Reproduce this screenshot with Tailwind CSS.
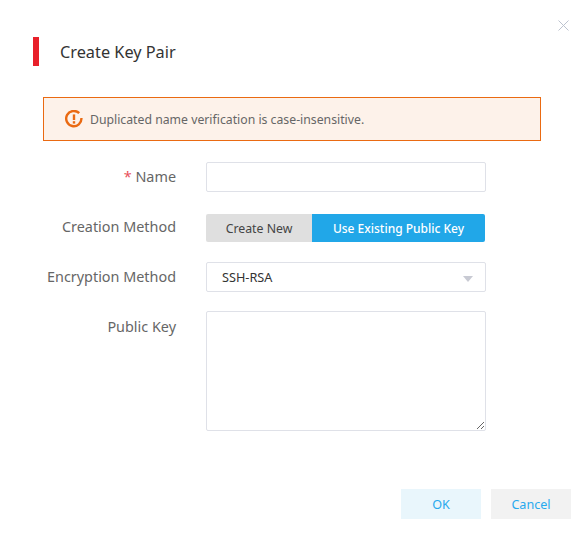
<!DOCTYPE html>
<html lang="en">

<head>
    <meta charset="UTF-8">
    <meta name="viewport" content="width=device-width, initial-scale=1.0">
    <title>Create Key Pair</title>
    <script src="https://cdn.jsdelivr.net/npm/@tailwindcss/browser@4"></script>
</head>

<body class="bg-white">
    <div class="relative w-[588px] h-[537px] overflow-hidden font-['Noto_Sans',sans-serif]">

        <!-- close -->
        <svg class="absolute left-[558px] top-[20px]" width="11" height="11" viewBox="0 0 11 11" fill="none" stroke="#bcc3cf" stroke-width="1">
            <path d="M0.5 0.5L10.5 10.5M10.5 0.5L0.5 10.5" />
        </svg>

        <!-- title -->
        <div class="flex items-center pt-[37px] pl-[33px] h-[66px]">
            <div class="w-[6px] h-[29px] bg-[#e8202a]"></div>
            <h1 class="ml-[21px] pt-[2px] text-[16.3px] leading-[29px] text-[#333]">Create Key Pair</h1>
        </div>

        <!-- alert -->
        <div class="mt-[31px] ml-[43px] w-[498px] h-[44px] flex items-center pl-[21px] border border-[#ea6a12] bg-[#fdf2ea]">
            <svg width="18" height="18" viewBox="0 0 18 18" fill="none" stroke="#ea6a12" stroke-width="2.4" class="shrink-0">
                <path d="M14.2 3.2A7.6 7.6 0 1 0 16.4 8" />
                <path d="M9 4.4V10" />
                <path d="M9 11.2V13.6" />
            </svg>
            <span class="ml-[7px] pt-[2px] text-[12.25px] text-[#666]">Duplicated name verification is case-insensitive.</span>
        </div>

        <!-- form -->
        <div class="mt-[21px] flex flex-col text-[14.4px] text-[#666]">
            <div class="flex h-[30px] items-center">
                <label class="w-[176px] text-right"><span class="text-[#e8505a]">*</span> Name</label>
                <input class="ml-[30px] w-[280px] h-[30px] border border-[#dfe1e8] rounded-[2px]">
            </div>

            <div class="flex h-[28px] mt-[22px] items-center">
                <label class="w-[176px] text-right pb-[2px]">Creation Method</label>
                <div class="ml-[30px] flex w-[279px] h-[28px] text-[12.3px]">
                    <div class="w-[106px] flex items-center justify-center pt-[2px] bg-[#dfdfdf] text-[#444] rounded-l-[2px]">Create New</div>
                    <div class="flex-1 flex items-center justify-center pt-[2px] text-[12px] bg-[#21a7e8] text-white font-medium rounded-r-[2px]">Use Existing Public Key</div>
                </div>
            </div>

            <div class="flex h-[30px] mt-[20px] items-center">
                <label class="w-[176px] text-right">Encryption Method</label>
                <div class="ml-[30px] w-[280px] h-[30px] border border-[#dfe1e8] rounded-[2px] flex items-center justify-between pl-[15px] pr-[12px] text-[12.7px] text-[#333]">
                    <span class="pt-[2px]">SSH-RSA</span>
                    <div class="mt-[3px] w-0 h-0 border-x-[5px] border-x-transparent border-t-[6px] border-t-[#c8cad3]"></div>
                </div>
            </div>

            <div class="flex mt-[19px]">
                <label class="w-[176px] text-right leading-[20px] pt-[6px]">Public Key</label>
                <textarea class="block ml-[30px] w-[280px] h-[120px] border border-[#dfe1e8] rounded-[2px]"></textarea>
            </div>
        </div>

        <!-- footer -->
        <div class="mt-[58px] ml-[401px] flex gap-[10px] text-[12.6px] text-[#29a9ee]">
            <button class="w-[80px] h-[30px] pt-[2px] bg-[#e9f6fc]">OK</button>
            <button class="w-[80px] h-[30px] pt-[2px] bg-[#f2f2f2]">Cancel</button>
        </div>
    </div>
</body>

</html>
